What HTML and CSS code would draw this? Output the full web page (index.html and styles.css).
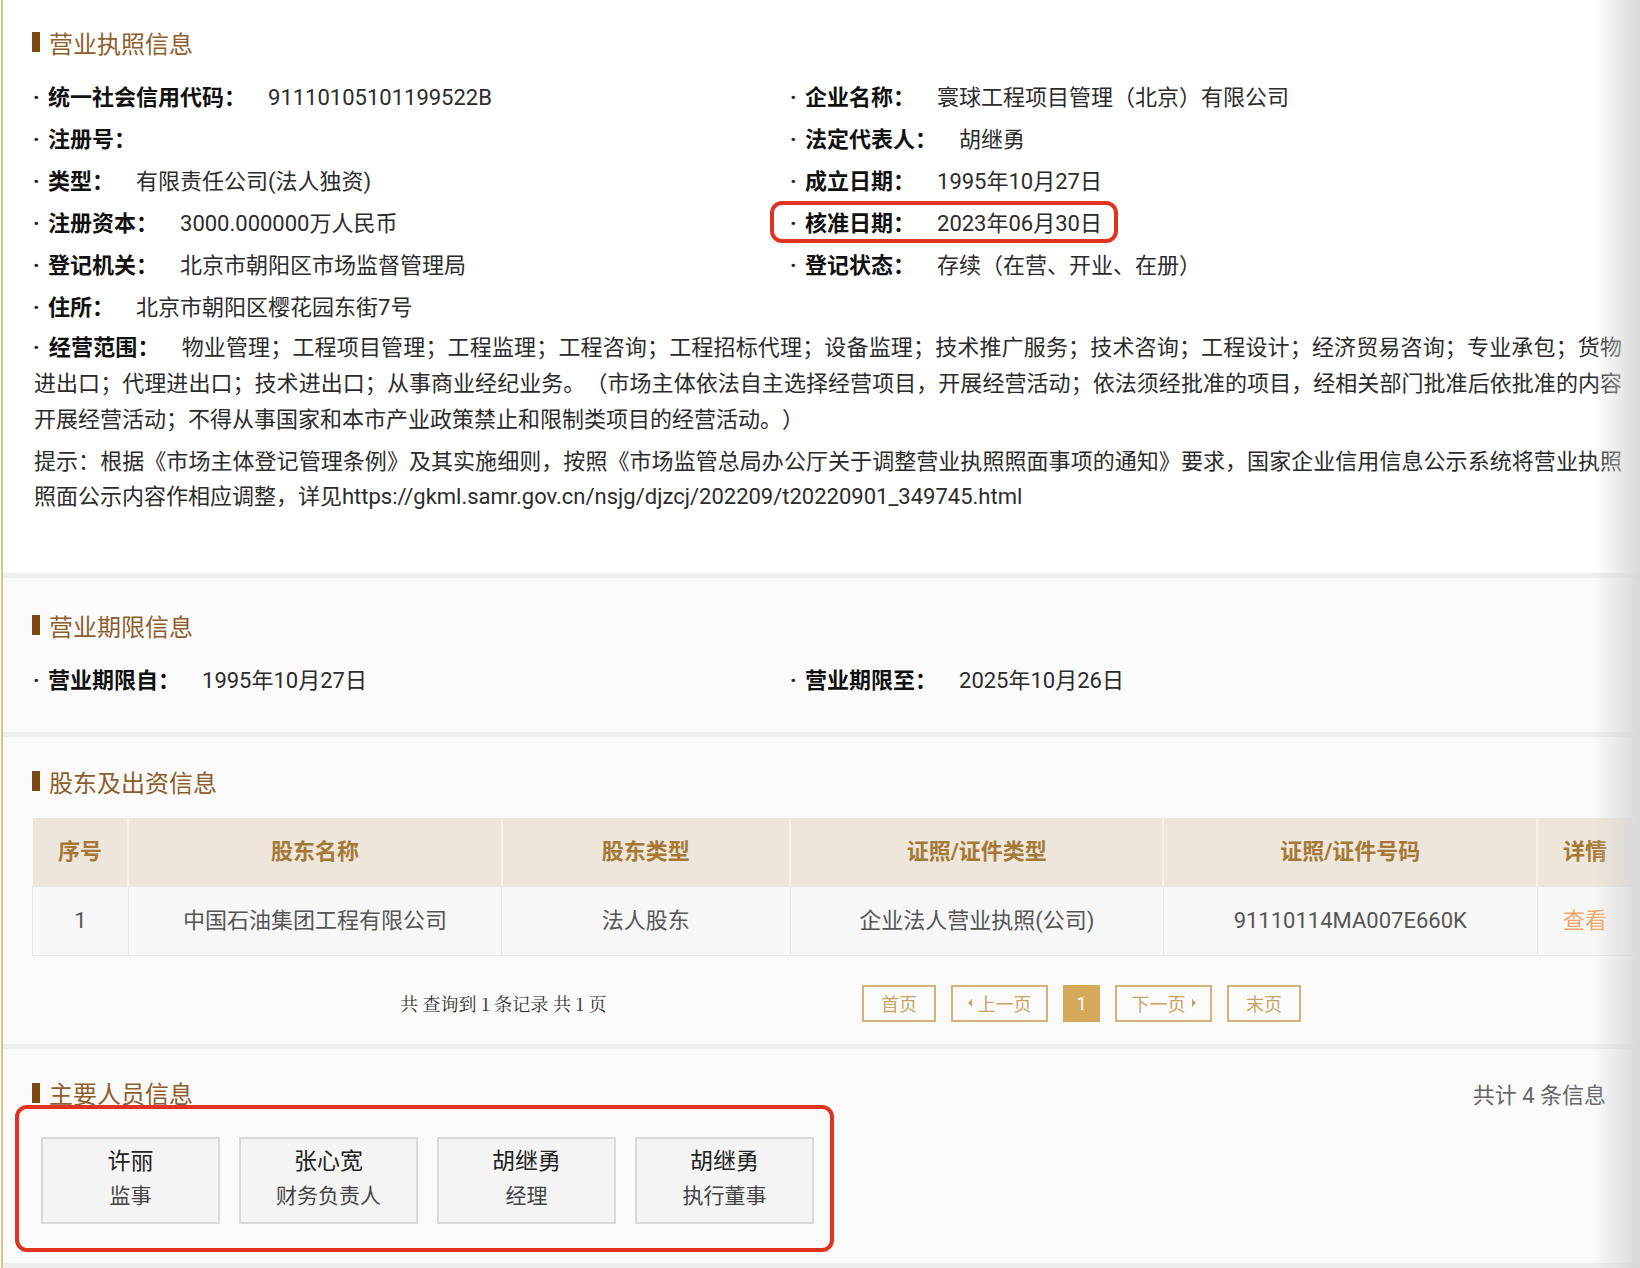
FILE: index.html
```html
<!DOCTYPE html>
<html lang="zh-CN">
  <head>
    <meta charset="UTF-8" />
    <meta name="viewport" content="width=device-width, initial-scale=1.0" />
    <title>企业信用信息</title>
    <link rel="stylesheet" href="styles.css">
  </head>
  <body>
    <div class="page">
      <!-- 营业执照信息 -->
      <div class="block block-license">
        <h2 class="title"><i class="bar"></i>营业执照信息</h2>
        <div class="fields">
          <div class="field"><span class="dot">·</span><b class="label">统一社会信用代码：</b><span>91110105101199522B</span></div>
          <div class="field"><span class="dot">·</span><b class="label">企业名称：</b><span>寰球工程项目管理（北京）有限公司</span></div>
          <div class="field"><span class="dot">·</span><b class="label">注册号：</b></div>
          <div class="field"><span class="dot">·</span><b class="label">法定代表人：</b><span>胡继勇</span></div>
          <div class="field"><span class="dot">·</span><b class="label">类型：</b><span>有限责任公司(法人独资)</span></div>
          <div class="field"><span class="dot">·</span><b class="label">成立日期：</b><span>1995年10月27日</span></div>
          <div class="field"><span class="dot">·</span><b class="label">注册资本：</b><span>3000.000000万人民币</span></div>
          <div class="field marked"><span class="dot">·</span><b class="label">核准日期：</b><span>2023年06月30日</span></div>
          <div class="field"><span class="dot">·</span><b class="label">登记机关：</b><span>北京市朝阳区市场监督管理局</span></div>
          <div class="field"><span class="dot">·</span><b class="label">登记状态：</b><span>存续（在营、开业、在册）</span></div>
          <div class="field"><span class="dot">·</span><b class="label">住所：</b><span>北京市朝阳区樱花园东街7号</span></div>
        </div>
        <p class="scope"><b class="label"><span class="dot-inline">·</span>经营范围：</b>物业管理；工程项目管理；工程监理；工程咨询；工程招标代理；设备监理；技术推广服务；技术咨询；工程设计；经济贸易咨询；专业承包；货物进出口；代理进出口；技术进出口；从事商业经纪业务。（市场主体依法自主选择经营项目，开展经营活动；依法须经批准的项目，经相关部门批准后依批准的内容开展经营活动；不得从事国家和本市产业政策禁止和限制类项目的经营活动。）</p>
        <p class="hint">提示：根据《市场主体登记管理条例》及其实施细则，按照《市场监管总局办公厅关于调整营业执照照面事项的通知》要求，国家企业信用信息公示系统将营业执照照面公示内容作相应调整，详见https://gkml.samr.gov.cn/nsjg/djzcj/202209/t20220901_349745.html</p>
      </div>

      <!-- 营业期限信息 -->
      <div class="block block-term">
        <h2 class="title"><i class="bar"></i>营业期限信息</h2>
        <div class="fields">
          <div class="field"><span class="dot">·</span><b class="label">营业期限自：</b><span>1995年10月27日</span></div>
          <div class="field"><span class="dot">·</span><b class="label">营业期限至：</b><span>2025年10月26日</span></div>
        </div>
      </div>

      <!-- 股东及出资信息 -->
      <div class="block block-holder">
        <h2 class="title"><i class="bar"></i>股东及出资信息</h2>
        <table class="grid" cellpadding="0" cellspacing="0">
          <colgroup>
            <col class="c-no" />
            <col class="c-wide" />
            <col class="c-type" />
            <col class="c-wide" />
            <col class="c-wide" />
            <col class="c-no" />
          </colgroup>
          <tr>
            <th>序号</th>
            <th>股东名称</th>
            <th>股东类型</th>
            <th>证照/证件类型</th>
            <th>证照/证件号码</th>
            <th>详情</th>
          </tr>
          <tr>
            <td>1</td>
            <td>中国石油集团工程有限公司</td>
            <td>法人股东</td>
            <td>企业法人营业执照(公司)</td>
            <td>91110114MA007E660K</td>
            <td><a class="view">查看</a></td>
          </tr>
        </table>
        <div class="pager">
          <span class="pager-info">共 查询到 1 条记录 共 1 页</span>
          <span class="page-btn">首页</span>
          <span class="page-btn"><i class="tri tri-left"></i>上一页</span>
          <span class="page-btn active">1</span>
          <span class="page-btn">下一页<i class="tri tri-right"></i></span>
          <span class="page-btn">末页</span>
        </div>
      </div>

      <!-- 主要人员信息 -->
      <div class="block block-people">
        <div class="title-row">
          <h2 class="title"><i class="bar"></i>主要人员信息</h2>
          <span class="count">共计 4 条信息</span>
        </div>
        <div class="people">
          <div class="person"><p class="name">许丽</p><p class="role">监事</p></div>
          <div class="person"><p class="name">张心宽</p><p class="role">财务负责人</p></div>
          <div class="person"><p class="name">胡继勇</p><p class="role">经理</p></div>
          <div class="person"><p class="name">胡继勇</p><p class="role">执行董事</p></div>
        </div>
      </div>
    </div>
  </body>
</html>
```

FILE: styles.css
```css
* {
  margin: 0;
  padding: 0;
  box-sizing: border-box;
}
body {
  font-family: Roboto, "Noto Sans CJK SC", sans-serif;
  color: #2b2b2b;
  background: #fff;
}
.page {
  margin-left: 1px;
  border-left: 2px solid #dcc190;
  min-height: 1268px;
  background: #fafafa;
}
/* right edge shade */
.page::after {
  content: "";
  position: fixed;
  top: 0;
  right: 0;
  width: 46px;
  height: 100%;
  background: linear-gradient(to right, rgba(220, 220, 220, 0), rgba(214, 214, 214, 0.95));
  pointer-events: none;
}

.block {
  padding: 29px 18px 0 31px;
  background: #fafafa;
  border-bottom: 5px solid #eeeeee;
}
.block-license {
  background: #fff;
  padding-top: 26px;
  padding-bottom: 59px;
}
.block-term {
  padding-top: 31px;
  padding-bottom: 32px;
}
.block-holder {
  padding-top: 28px;
  padding-bottom: 22px;
}
.block-people {
  padding-top: 28px;
  padding-bottom: 11px;
}

.title {
  display: flex;
  align-items: center;
  height: 32px;
  font-size: 24px;
  font-weight: normal;
  color: #8d5e2c;
}
.title .bar {
  display: inline-block;
  width: 8px;
  height: 20px;
  margin-left: -2px;
  margin-right: 9px;
  background: #7a4813;
}

.fields {
  display: grid;
  grid-template-columns: 757px 1fr;
  margin-top: 17px;
}
.field {
  display: flex;
  align-items: center;
  height: 42px;
  padding-top: 4px;
  line-height: 34px;
  font-size: 22px;
  white-space: nowrap;
}
.dot {
  display: inline-block;
  width: 15px;
  margin-left: -1px;
  font-weight: bold;
  color: #222;
}
.dot-inline {
  margin-left: -1px;
  margin-right: 9px;
  color: #222;
}
.label {
  margin-right: 22px;
  color: #111;
}
.field.marked {
  justify-self: start;
  margin-left: -21px;
  padding: 4px 12px 0 17px;
  border: 4px solid #e1311f;
  border-radius: 12px;
}

.scope,
.hint {
  font-size: 22px;
  text-align: justify;
  text-spacing-trim: space-all;
}
.scope {
  margin-top: 3px;
  line-height: 36px;
}
.hint {
  margin-top: 6px;
  line-height: 35px;
}

/* shareholders table */
.grid {
  width: 1602px;
  margin-top: 21px;
  margin-left: -2px;
  border-collapse: collapse;
  font-size: 22px;
  line-height: 30px;
}
.c-no {
  width: 96px;
}
.c-wide {
  width: 374px;
}
.c-type {
  width: 289px;
}
th {
  height: 68px;
  background: #eee6da;
  color: #a47936;
  font-weight: bold;
  border-right: 2px solid #f6f1ea;
}
td {
  height: 69px;
  text-align: center;
  background: #f7f7f7;
  color: #555;
  border: 1px solid #e6e6e6;
}
.view {
  color: #f0a766;
}

.pager {
  display: flex;
  align-items: center;
  margin-top: 29px;
  height: 37px;
}
.pager-info {
  width: 828px;
  padding-left: 366px;
  font-family: "Noto Serif CJK SC", "Liberation Serif", serif;
  font-size: 18px;
  color: #333;
}
.page-btn {
  display: flex;
  align-items: center;
  justify-content: center;
  height: 37px;
  width: 97px;
  margin-right: 15px;
  border: 2px solid #d3b37b;
  color: #c8a25f;
  font-size: 18px;
}
.page-btn:nth-of-type(2),
.page-btn:last-child {
  width: 74px;
}
.page-btn.active {
  width: 37px;
  background: #d4a95a;
  border-color: #d4a95a;
  color: #fff;
}
.tri {
  display: inline-block;
  width: 0;
  height: 0;
  border-top: 4px solid transparent;
  border-bottom: 4px solid transparent;
}
.tri-left {
  margin-right: 6px;
  border-right: 4px solid #c8a25f;
}
.tri-right {
  margin-left: 6px;
  border-left: 4px solid #c8a25f;
}

/* key people */
.title-row {
  display: flex;
  justify-content: space-between;
  align-items: center;
  padding-right: 16px;
}
.count {
  font-size: 22px;
  color: #666;
}
.people {
  display: flex;
  gap: 19px;
  width: fit-content;
  margin-top: -4px;
  margin-left: -19px;
  padding: 28px 16px 24px 22px;
  border: 4px solid #e1311f;
  border-radius: 12px;
}
.person {
  width: 179px;
  height: 87px;
  padding-top: 8px;
  text-align: center;
  background: #f4f4f4;
  border: 2px solid #dadada;
}
.name {
  font-size: 23px;
  line-height: 30px;
  color: #222;
}
.role {
  font-size: 21px;
  line-height: 38px;
  color: #444;
}
```
